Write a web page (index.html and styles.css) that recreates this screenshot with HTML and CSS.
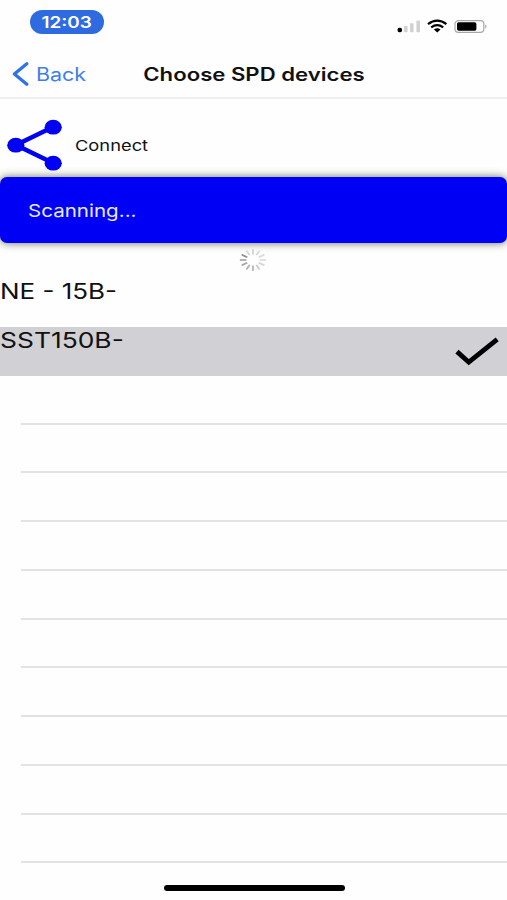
FILE: index.html
```
<!DOCTYPE html>
<html lang="en">
<head>
    <meta charset="UTF-8">
    <meta name="viewport" content="width=device-width, initial-scale=1.0">
    <title>Choose SPD devices</title>
    <link rel="stylesheet" href="styles.css">
</head>
<body>
<div class="status-bar">
    <div class="time"><span>12:03</span></div>
    <svg class="status-icons" width="92" height="16" viewBox="0 0 92 16">
        <rect x="0.6" y="8.8" width="4.4" height="4.4" rx="1.6" fill="#000"/>
        <g fill="#d2d2d2">
            <rect x="7" y="7" width="3.6" height="6.2" rx="0.8"/>
            <rect x="13" y="4.2" width="3.6" height="9" rx="0.8"/>
            <rect x="19.4" y="1.6" width="3.6" height="11.6" rx="0.8"/>
        </g>
        <g fill="none" stroke="#000" stroke-width="2.2">
            <path d="M31 5.1 Q40.2 -1.9 49.4 5.1"/>
            <path d="M34.2 8.3 Q40.2 3.9 46.2 8.3"/>
        </g>
        <path d="M36.9 10.4 Q40.2 8 43.5 10.4 L40.2 13.4 Z" fill="#000"/>
        <rect x="58" y="1.6" width="28.8" height="11.8" rx="3.4" fill="#fff" stroke="#a8a8a8" stroke-width="1.2"/>
        <rect x="60" y="3.3" width="19.4" height="8.4" rx="1.7" fill="#000"/>
        <path d="M88.2 5.2 Q90.8 7.5 88.2 9.8 Z" fill="#a8a8a8"/>
    </svg>
</div>
<header>
    <a class="back" href="#">
        <svg width="17" height="24" viewBox="0 0 17 24">
            <path d="M14.8 1.8 L2.4 12 L14.8 22.2" fill="none" stroke="#2f73ec" stroke-width="3.3" stroke-linecap="round" stroke-linejoin="round"/>
        </svg>
        <span>Back</span>
    </a>
    <h1>Choose SPD devices</h1>
</header>
<main>
    <div class="connect">
        <svg width="56" height="52" viewBox="0 0 56 52">
            <path d="M46 8 L9 26 L46 44" fill="none" stroke="#0000f5" stroke-width="4.6"/>
            <g fill="#0000f5">
                <ellipse cx="46.2" cy="8.2" rx="8.6" ry="7.4"/>
                <ellipse cx="8.8" cy="26.2" rx="8.6" ry="7.4"/>
                <ellipse cx="46.2" cy="44.2" rx="8.6" ry="7.4"/>
            </g>
        </svg>
        <span>Connect</span>
    </div>
    <div class="scanning"><span>Scanning...</span></div>
    <div class="loading">
        <svg width="28" height="24" viewBox="-14 -12 28 24">
            <g transform="scale(1.2 1)" stroke-width="1.7" stroke-linecap="round">
                <path d="M0 -6.2 V-10.2" stroke="#d6d6d6"/>
                <path d="M0 -6.2 V-10.2" stroke="#dadada" transform="rotate(30)"/>
                <path d="M0 -6.2 V-10.2" stroke="#dadada" transform="rotate(60)"/>
                <path d="M0 -6.2 V-10.2" stroke="#d8d8d8" transform="rotate(90)"/>
                <path d="M0 -6.2 V-10.2" stroke="#d4d4d4" transform="rotate(120)"/>
                <path d="M0 -6.2 V-10.2" stroke="#cccccc" transform="rotate(150)"/>
                <path d="M0 -6.2 V-10.2" stroke="#bebebe" transform="rotate(180)"/>
                <path d="M0 -6.2 V-10.2" stroke="#b2b2b2" transform="rotate(210)"/>
                <path d="M0 -6.2 V-10.2" stroke="#a6a6a6" transform="rotate(240)"/>
                <path d="M0 -6.2 V-10.2" stroke="#9a9a9a" transform="rotate(270)"/>
                <path d="M0 -6.2 V-10.2" stroke="#929292" transform="rotate(300)"/>
                <path d="M0 -6.2 V-10.2" stroke="#dadada" transform="rotate(330)"/>
            </g>
        </svg>
    </div>
    <ul class="devices">
        <li class="device"><span class="ne">NE - 15B-</span></li>
        <li class="device selected">
            <span class="sst">SST150B-</span>
            <svg width="46" height="30" viewBox="0 0 46 30">
                <path d="M3 14.6 L14.8 25.2 L43.2 2.4" fill="none" stroke="#000" stroke-width="4.8"/>
            </svg>
        </li>
        <li></li>
        <li></li>
        <li></li>
        <li></li>
        <li></li>
        <li></li>
        <li></li>
        <li></li>
        <li></li>
        <li></li>
    </ul>
</main>
<footer>
    <div class="home-bar"></div>
</footer>
</body>
</html>
```

FILE: styles.css
```
* {
    box-sizing: border-box;
}
body {
    font-family: Inter, "Liberation Sans", sans-serif;
    background-color: #fefefe;
    color: #111;
    margin: 0;
    height: 900px;
    overflow: hidden;
}
svg {
    display: block;
    flex: none;
}
/* wide lettering */
span, h1 {
    display: inline-block;
    white-space: nowrap;
    transform: scaleX(1.22);
    transform-origin: left center;
}
.status-bar {
    display: flex;
    justify-content: space-between;
    height: 50px;
    padding: 10px 18px 0 30px;
}
.time {
    width: 74px;
    height: 24px;
    border-radius: 12px;
    background-color: #2f6be0;
    color: #fff;
    font-size: 15.5px;
    font-weight: 600;
    line-height: 25px;
    text-align: center;
}
.time span {
    transform-origin: center;
}
.status-icons {
    margin-top: 9px;
}
header {
    display: grid;
    grid-template-columns: 1fr auto 1fr;
    align-items: center;
    height: 49px;
    border-bottom: 2px solid #efefef;
}
.back {
    display: flex;
    align-items: center;
    gap: 7px;
    padding-left: 12px;
    color: #3e7df0;
    font-size: 18px;
    text-decoration: none;
}
.back span {
    padding-top: 2px;
    transform: scaleX(1.19);
}
h1 {
    margin: 0;
    padding-top: 2px;
    font-size: 18px;
    font-weight: 600;
    transform: scaleX(1.23);
    transform-origin: center;
}
.connect {
    display: flex;
    align-items: center;
    gap: 12px;
    height: 78px;
    padding: 14px 0 0 7px;
    font-size: 15px;
}
.scanning {
    height: 66px;
    padding-left: 28px;
    border-radius: 7px;
    background-color: #0000f5;
    box-shadow: 0 0 9px rgba(60, 60, 30, 0.75);
    color: #e8e8ff;
    font-size: 17.5px;
    line-height: 67px;
}
.scanning span {
    transform: scaleX(1.175);
}
.loading {
    display: flex;
    justify-content: center;
    height: 35.3px;
    padding: 5px 1px 0 0;
}
.devices {
    margin: 0;
    padding: 0;
    list-style: none;
}
.devices li {
    height: 48.75px;
    margin-left: 21px;
    border-bottom: 2px solid #e3e3e3;
}
.devices .device {
    display: flex;
    justify-content: space-between;
    margin-left: 0;
    border-bottom: none;
    font-size: 22px;
    line-height: 27px;
}
.devices .selected {
    padding-right: 7px;
    background-color: #d1d0d5;
}
.device .ne {
    transform: scaleX(1.18);
}
.device .sst {
    transform: scaleX(1.2);
}
.selected svg {
    margin-top: 10px;
}
footer {
    display: flex;
    justify-content: center;
    padding: 22px 0 0 1px;
}
.home-bar {
    width: 181px;
    height: 6px;
    border-radius: 3px;
    background-color: #000;
}
```
